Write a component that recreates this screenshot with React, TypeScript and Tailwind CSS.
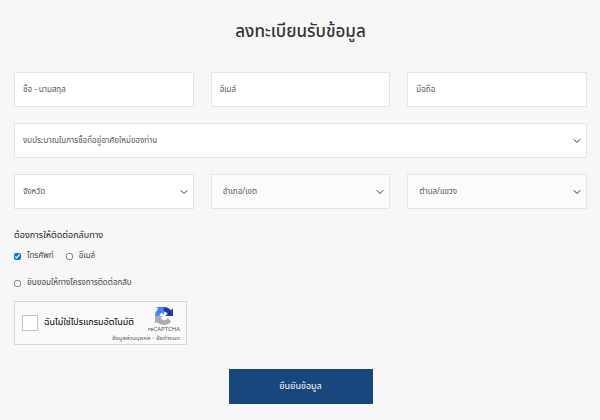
import React from "react";
import clsx from "clsx";
import { FiChevronDown } from "react-icons/fi";

type TextFieldProps = {
  label: string;
  name: string;
  type: string;
};

const TextField: React.FC<TextFieldProps> = ({ label, name, type }) => (
  <input
    type={type}
    name={name}
    aria-label={label}
    placeholder={label}
    className="h-[35px] w-full min-w-0 border border-[#e4e4e4] bg-white px-2 text-[8px] text-[#555] placeholder:text-[#555] outline-none"
  />
);

type SelectFieldProps = {
  label: string;
  name: string;
  disabled?: boolean;
};

const SelectField: React.FC<SelectFieldProps> = ({ label, name, disabled }) => (
  <div className="relative min-w-0">
    <select
      name={name}
      aria-label={label}
      disabled={disabled}
      className={clsx(
        "block h-[35px] w-full appearance-none border border-[#e4e4e4] pr-6 text-[8px] text-[#555] opacity-100 outline-none",
        disabled ? "bg-[#fbfbfb] pl-[11px]" : "bg-white pl-2"
      )}
    >
      <option>{label}</option>
    </select>
    <FiChevronDown
      size={12}
      className="pointer-events-none absolute inset-y-0 right-1 my-auto text-[#333]"
    />
  </div>
);

type CheckFieldProps = {
  label: string;
  name: string;
  defaultChecked?: boolean;
};

const CheckField: React.FC<CheckFieldProps> = ({
  label,
  name,
  defaultChecked,
}) => (
  <label className="flex items-center gap-[6px] text-[8px] leading-4 text-[#444]">
    <input
      type="checkbox"
      name={name}
      defaultChecked={defaultChecked}
      className="size-[7px] accent-[#0b74e5]"
    />
    {label}
  </label>
);

const RecaptchaLogo = () => (
  <svg viewBox="0 0 64 64" className="size-[18px]" aria-hidden="true">
    <path
      d="M64 31.955l-.012-1.370V4.687l-7.160 7.160C50.968 4.674 42.050.093 32.060.093c-10.396 0-19.632 4.961-25.431 12.645l11.736 11.860a15.550 15.550 0 0 1 4.754-5.334c2.050-1.600 4.952-2.906 8.940-2.906.482 0 .854.056 1.127.162 4.941.39 9.224 3.117 11.746 7.075l-8.307 8.307 27.375-.053"
      fill="#1c3aa9"
    />
    <path
      d="M31.862.094l-1.370.011H4.594l7.160 7.160C4.582 13.125 0 22.043 0 32.033c0 10.396 4.961 19.632 12.645 25.431l11.860-11.736a15.550 15.550 0 0 1-5.334-4.754c-1.600-2.050-2.906-4.952-2.906-8.940 0-.482.056-.854.162-1.127.39-4.941 3.117-9.224 7.075-11.746l8.307 8.307-.053-27.375"
      fill="#4285f4"
    />
    <path
      d="M.001 32.045l.012 1.370v25.898l7.160-7.160c5.860 7.173 14.774 11.754 24.768 11.754 10.396 0 19.632-4.961 25.431-12.645L45.636 39.406a15.550 15.550 0 0 1-4.754 5.334c-2.050 1.600-4.952 2.906-8.940 2.906-.482 0-.854-.056-1.127-.162-4.941-.39-9.224-3.117-11.746-7.075l8.307-8.307-27.375.053"
      fill="#ababab"
    />
  </svg>
);

const Recaptcha = () => (
  <div className="flex h-11 w-[173px] items-center border border-[#d6d6d6] bg-[#fafafa] pl-[7px]">
    <label className="flex items-center gap-[6px] whitespace-nowrap text-[9px] text-black">
      <input
        type="checkbox"
        name="robot"
        className="size-4 appearance-none border border-[#c1c1c1] bg-white"
      />
      ฉันไม่ใช่โปรแกรมอัตโนมัติ
    </label>
    <div className="flex flex-1 flex-col items-end pt-1 pr-[6px] text-[6px] text-[#555]">
      <div className="flex flex-col items-center">
        <RecaptchaLogo />
        <span className="leading-[10px]">reCAPTCHA</span>
      </div>
      <div className="flex w-0 justify-end gap-[2px] whitespace-nowrap leading-[8px]">
        <a href="#privacy">ข้อมูลส่วนบุคคล</a>
        <span>-</span>
        <a href="#terms">ข้อกำหนด</a>
      </div>
    </div>
  </div>
);

const App = () => {
  return (
    <main className="min-h-screen bg-[#f7f7f7] pt-4 pr-[13px] pb-4 pl-[14px] font-['Noto_Sans_Thai','Noto_Sans',sans-serif]">
      <h1 className="text-center text-[17px] leading-8 font-medium text-[#333]">
        ลงทะเบียนรับข้อมูล
      </h1>
      <form
        className="mt-6 flex flex-col"
        onSubmit={(e) => e.preventDefault()}
      >
        <div className="grid gap-4">
          <div className="grid grid-cols-3 gap-[17px]">
            <TextField label="ชื่อ - นามสกุล" name="name" type="text" />
            <TextField label="อีเมล์" name="email" type="email" />
            <TextField label="มือถือ" name="mobile" type="tel" />
          </div>
          <SelectField
            label="งบประมาณในการซื้อที่อยู่อาศัยใหม่ของท่าน"
            name="budget"
          />
          <div className="grid grid-cols-3 gap-[17px]">
            <SelectField label="จังหวัด" name="province" />
            <SelectField label="อำเภอ/เขต" name="district" disabled />
            <SelectField label="ตำบล/แขวง" name="subdistrict" disabled />
          </div>
        </div>

        <fieldset className="mt-4">
          <legend className="text-[9px] leading-5 text-[#222]">
            ต้องการให้ติดต่อกลับทาง
          </legend>
          <div className="mt-[3px] flex gap-3">
            <CheckField label="โทรศัพท์" name="byPhone" defaultChecked />
            <CheckField label="อีเมล์" name="byEmail" />
          </div>
        </fieldset>
        <div className="mt-[11px] mb-[10px] flex">
          <CheckField label="ยินยอมให้ทางโครงการติดต่อกลับ" name="consent" />
        </div>

        <Recaptcha />

        <button
          type="submit"
          className="mt-6 h-[35px] w-36 self-center bg-[#17477c] text-[9px] text-white"
        >
          ยืนยันข้อมูล
        </button>
      </form>
    </main>
  );
};

export default App;
